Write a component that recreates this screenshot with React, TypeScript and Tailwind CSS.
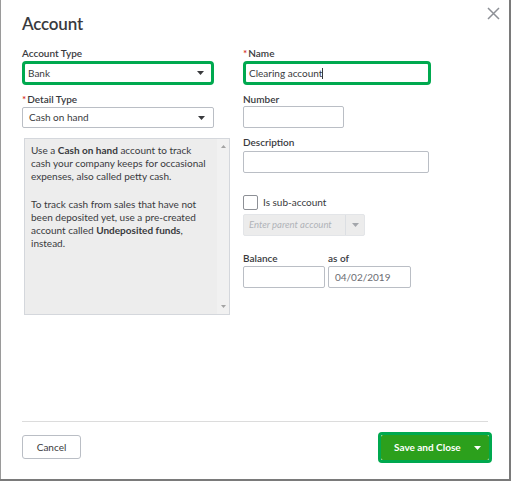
import React from "react";

const font = { fontFamily: "Lato, 'Open Sans', Arial, sans-serif" };

const Label = ({ text, required }: { text: string; required?: boolean }) => (
  <div className="h-[14px] text-[10px] leading-[14px] text-[#393a3d] font-semibold">
    {required && <span className="text-[#d52b1e] mr-[1px]">*</span>}
    {text}
  </div>
);

const Caret = ({ color = "#393a3d" }: { color?: string }) => (
  <svg width="7" height="4" viewBox="0 0 7 4">
    <path d="M0 0h7L3.5 4z" fill={color} />
  </svg>
);

export default function App() {
  return (
    <div className="w-[511px] h-[481px] bg-[#7a7a7a] overflow-hidden" style={font}>
      <div className="relative w-[509px] h-[479px] bg-white border-l border-[#9a9a9a] flex flex-col">
        {/* close */}
        <button className="absolute right-[9px] top-[7px] w-[13px] h-[13px]">
          <svg width="13" height="13" viewBox="0 0 13 13">
            <path d="M1 1l11 11M12 1L1 12" stroke="#8d9096" strokeWidth="1.5" />
          </svg>
        </button>

        <div className="pl-[21px] pt-[12px] h-[24px] box-content text-[17px] leading-[24px] tracking-[-0.2px] text-[#393a3d] font-semibold">
          Account
        </div>

        <div className="flex pl-[21px] mt-[10px]">
          {/* left column */}
          <div className="w-[208px] flex flex-col">
            <Label text="Account Type" />
            <div className="mt-[1px] w-[192px] h-[24px] border-[3px] border-[#00a94f] rounded-[4px] flex items-center justify-between pl-[3px] pr-[7px] text-[10px] text-[#393a3d]">
              <span>Bank</span>
              <Caret />
            </div>
            <div className="mt-[7px]">
              <Label text="Detail Type" required />
            </div>
            <div className="mt-[1px] w-[192px] h-[21px] border border-[#babec5] rounded-[2px] flex items-center justify-between pl-[6px] pr-[8px] text-[10px] text-[#393a3d]">
              <span>Cash on hand</span>
              <Caret />
            </div>
            <div className="mt-[10px] ml-[2px] w-[206px] h-[177px] bg-[#ededed] border border-[#d4d7dc] flex justify-between">
              <div className="w-[186px] pl-[6px] pt-[5px] text-[10px] leading-[13px] text-[#393a3d]">
                <p>
                  Use a <b>Cash on hand</b> account to track cash your company keeps for occasional
                  expenses, also called petty cash.
                </p>
                <p className="mt-[15px]">
                  To track cash from sales that have not been deposited yet, use a pre-created
                  account called <b>Undeposited funds</b>, instead.
                </p>
              </div>
              <div className="w-[12px] flex flex-col justify-between items-center py-[6px] bg-[#f1f1f1]">
                <svg width="5" height="3" viewBox="0 0 5 3">
                  <path d="M0 3h5L2.5 0z" fill="#a3a3a3" />
                </svg>
                <svg width="5" height="3" viewBox="0 0 5 3">
                  <path d="M0 0h5L2.5 3z" fill="#a3a3a3" />
                </svg>
              </div>
            </div>
          </div>

          {/* right column */}
          <div className="ml-[13px] flex flex-col">
            <Label text="Name" required />
            <div className="mt-[1px] w-[188px] h-[24px] border-[3px] border-[#00a94f] rounded-[4px] flex items-center pl-[3px] text-[10px] text-[#393a3d]">
              <span>Clearing account</span>
              <span className="w-px h-[11px] bg-[#393a3d]" />
            </div>
            <div className="mt-[7px]">
              <Label text="Number" />
            </div>
            <div className="w-[101px] h-[22px] border border-[#babec5] rounded-[2px]" />
            <div className="mt-[7px]">
              <Label text="Description" />
            </div>
            <div className="mt-[2px] w-[186px] h-[22px] border border-[#babec5] rounded-[2px]" />
            <div className="mt-[22px] flex items-center gap-[5px]">
              <div className="w-[15px] h-[15px] border border-[#8d9096] rounded-[2px] bg-white" />
              <span className="text-[10px] text-[#393a3d]">Is sub-account</span>
            </div>
            <div className="mt-[4px] w-[122px] h-[22px] bg-[#ececec] border border-[#e3e5e8] rounded-[2px] flex">
              <div className="flex-1 flex items-center pl-[5px] text-[9.5px] italic text-[#b0b3b8]">
                Enter parent account
              </div>
              <div className="w-[19px] border-l border-[#dcdfe3] flex items-center justify-center">
                <Caret color="#a3a6ab" />
              </div>
            </div>
            <div className="mt-[15px] flex">
              <div className="w-[85px]">
                <Label text="Balance" />
              </div>
              <Label text="as of" />
            </div>
            <div className="mt-[1px] flex gap-[3px]">
              <div className="w-[82px] h-[22px] border border-[#babec5] rounded-[2px]" />
              <div className="w-[83px] h-[22px] border border-[#babec5] rounded-[2px] flex items-center pl-[6px] text-[10px] text-[#6b6c72]">
                04/02/2019
              </div>
            </div>
          </div>
        </div>

        {/* footer */}
        <div className="mt-auto mx-[21px] border-t border-[#dcdcdc]" />
        <div className="h-[57px] flex items-start justify-between pl-[21px] pr-[17px] pt-[10px]">
          <button className="mt-[3px] w-[59px] h-[24px] border border-[#babec5] rounded-[3px] text-[10px] text-[#393a3d]">
            Cancel
          </button>
          <div className="border-[3px] border-[#00a94f] rounded-[4px] p-0">
            <div className="w-[108px] h-[25px] bg-[#2ca01c] rounded-[2px] flex items-center text-white text-[10px] font-bold">
              <span className="pl-[13px] flex-1">Save and Close</span>
              <span className="pr-[8px] pt-[1px]">
                <Caret color="#ffffff" />
              </span>
            </div>
          </div>
        </div>
      </div>
    </div>
  );
}
